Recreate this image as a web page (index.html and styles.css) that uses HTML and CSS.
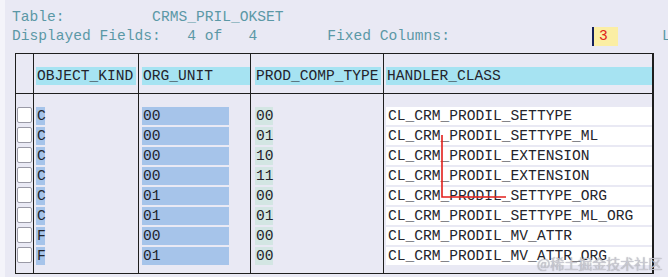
FILE: index.html
```html
<!DOCTYPE html>
<html>
<head>
<meta charset="utf-8">
<link rel="stylesheet" href="styles.css">
</head>
<body>
<div class="page">
  <div class="info">
    <div class="line">Table:          CRMS_PRIL_OKSET</div>
    <div class="line line2"><span>Displayed Fields:   4 of   4        Fixed Columns:</span><span class="fixed"><span class="cursor"></span><span class="num">3</span></span><span class="lbl-l">L</span></div>
  </div>
  <div class="grid">
    <div class="cell c0"></div>
    <div class="cell c1"><div class="label">OBJECT_KIND</div></div>
    <div class="cell c2"><div class="label">ORG_UNIT</div></div>
    <div class="cell c3"><div class="label">PROD_COMP_TYPE</div></div>
    <div class="cell c4"><div class="label">HANDLER_CLASS</div></div>

    <div class="cell body c0">
      <div class="row"><span class="chk"></span></div>
      <div class="row"><span class="chk"></span></div>
      <div class="row"><span class="chk"></span></div>
      <div class="row"><span class="chk"></span></div>
      <div class="row"><span class="chk"></span></div>
      <div class="row"><span class="chk"></span></div>
      <div class="row"><span class="chk"></span></div>
      <div class="row"><span class="chk"></span></div>
    </div>
    <div class="cell body c1">
      <div class="row"><span class="fld f1">C</span></div>
      <div class="row"><span class="fld f1">C</span></div>
      <div class="row"><span class="fld f1">C</span></div>
      <div class="row"><span class="fld f1">C</span></div>
      <div class="row"><span class="fld f1">C</span></div>
      <div class="row"><span class="fld f1">C</span></div>
      <div class="row"><span class="fld f1">F</span></div>
      <div class="row"><span class="fld f1">F</span></div>
    </div>
    <div class="cell body c2">
      <div class="row"><span class="fld f2">00</span></div>
      <div class="row"><span class="fld f2">00</span></div>
      <div class="row"><span class="fld f2">00</span></div>
      <div class="row"><span class="fld f2">00</span></div>
      <div class="row"><span class="fld f2">01</span></div>
      <div class="row"><span class="fld f2">01</span></div>
      <div class="row"><span class="fld f2">00</span></div>
      <div class="row"><span class="fld f2">01</span></div>
    </div>
    <div class="cell body c3">
      <div class="row"><span class="fld f3">00</span></div>
      <div class="row"><span class="fld f3">01</span></div>
      <div class="row"><span class="fld f3">10</span></div>
      <div class="row"><span class="fld f3">11</span></div>
      <div class="row"><span class="fld f3">00</span></div>
      <div class="row"><span class="fld f3">01</span></div>
      <div class="row"><span class="fld f3">00</span></div>
      <div class="row"><span class="fld f3">00</span></div>
    </div>
    <div class="cell body c4">
      <div class="row"><span class="fld f4">CL_CRM_PRODIL_SETTYPE</span></div>
      <div class="row"><span class="fld f4">CL_CRM_PRODIL_SETTYPE_ML</span></div>
      <div class="row"><span class="fld f4">CL_CRM_PRODIL_EXTENSION</span></div>
      <div class="row"><span class="fld f4">CL_CRM_PRODIL_EXTENSION</span></div>
      <div class="row"><span class="fld f4">CL_CRM_PRODIL_SETTYPE_ORG</span></div>
      <div class="row"><span class="fld f4">CL_CRM_PRODIL_SETTYPE_ML_ORG</span></div>
      <div class="row"><span class="fld f4">CL_CRM_PRODIL_MV_ATTR</span></div>
      <div class="row"><span class="fld f4">CL_CRM_PRODIL_MV_ATTR_ORG</span></div>
    </div>
  </div>
  <svg class="annot" width="668" height="277" viewBox="0 0 668 277">
    <polyline points="442,135 442,197 506,197" fill="none" stroke="#e3201c" stroke-width="1.6"/>
  </svg>
  <div class="wm">@稀土掘金技术社区</div>
</div>
</body>
</html>
```

FILE: styles.css
```css
html, body {
  margin: 0;
  padding: 0;
  background: #e9e9f4;
  overflow: hidden;
}
.page {
  position: relative;
  width: 663px;
  height: 277px;
  border-left: 5px solid #f4f4fa;
  padding-top: 8px;
  box-sizing: border-box;
  font-family: "Liberation Mono", "Courier New", monospace;
  font-size: 14.6px;
}
.info {
  padding-left: 7px;
  color: #5b98a6;
}
.line {
  height: 19px;
  line-height: 19px;
  white-space: pre;
}
.line2 {
  display: flex;
  align-items: stretch;
}
.fixed {
  display: flex;
  margin-left: 142px;
  height: 19px;
}
.cursor {
  width: 2px;
  background: #14205a;
}
.num {
  width: 24px;
  background: #fbeea4;
  color: #e02418;
  padding-left: 5px;
  box-sizing: border-box;
}
.lbl-l {
  margin-left: 44px;
}
.grid {
  display: grid;
  grid-template-columns: 18px 105px 112px 133px 270px;
  grid-template-rows: 40px 180px;
  margin-left: 10px;
  margin-top: 7px;
  width: 639px;
  border-top: 1px solid #1e1e1e;
  border-left: 1px solid #1e1e1e;
  box-sizing: border-box;
  color: #24242c;
}
.cell {
  border-right: 1px solid #1e1e1e;
  border-bottom: 1px solid #1e1e1e;
  padding-top: 13px;
  box-sizing: border-box;
  min-width: 0;
}
.c4 { border-right-width: 2px; }
.c1 { padding-left: 2px; padding-right: 2px; }
.c2 { padding-left: 3px; }
.c3 { padding-left: 4px; padding-right: 2px; }
.c4 { padding-left: 2px; }
.label {
  height: 18px;
  line-height: 18px;
  background: #a6e3f2;
  padding-left: 1px;
  white-space: pre;
  overflow: hidden;
}
.row {
  height: 18px;
  margin-bottom: 2px;
  display: flex;
}
.fld {
  display: block;
  height: 18px;
  line-height: 18px;
  padding-left: 1px;
  white-space: pre;
  box-sizing: border-box;
}
.f1 { width: 9px; background: #a6c4ea; }
.f2 { width: 87px; background: #a6c4ea; }
.f3 { width: 18px; background: #d3e6e3; }
.f4 { width: 100%; background: #ffffff; padding-left: 2px; }
.chk {
  display: block;
  width: 15px;
  height: 16px;
  margin-left: 1px;
  background: #ffffff;
  border: 1px solid #9a9aa6;
  border-radius: 2px;
  box-sizing: border-box;
}
.annot {
  position: absolute;
  left: -5px;
  top: 0;
  pointer-events: none;
}
.wm {
  position: absolute;
  left: 532px;
  top: 254px;
  font-family: "Noto Sans CJK SC", sans-serif;
  font-size: 14px;
  line-height: 18px;
  color: rgba(205, 205, 214, 0.92);
  text-shadow: 0 0 1px rgba(80, 80, 92, 0.6);
  white-space: nowrap;
}
```
